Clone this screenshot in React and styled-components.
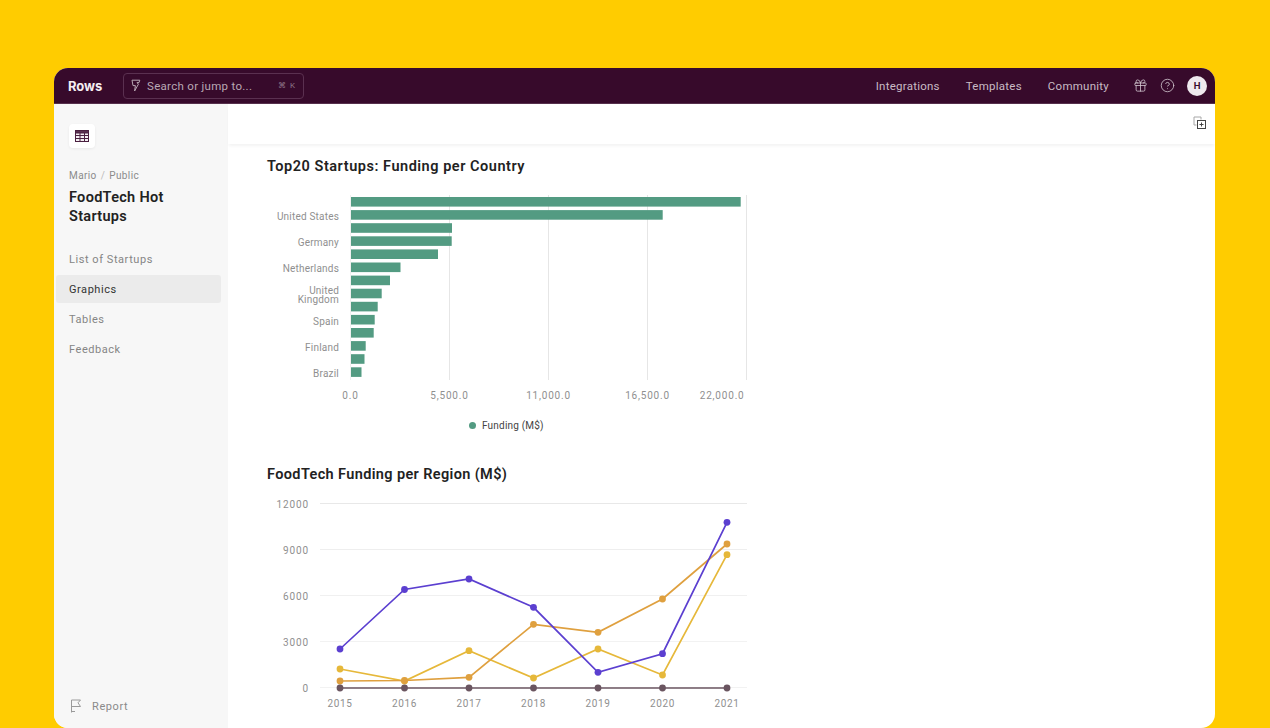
import styled, { createGlobalStyle } from "styled-components";
import { Gift, CircleHelp } from "lucide-react";

const GlobalStyle = createGlobalStyle`
  html, body {
    margin: 0;
    height: 100%;
    overflow: hidden;
    background: #ffcc00;
  }
  #root {
    height: 100%;
  }
`;

const Page = styled.div`
  box-sizing: border-box;
  height: 728px;
  padding: 68px 55px 0 54px;
  background: #ffcc00;
  font-family: Roboto, "Noto Sans", sans-serif;
`;

const Frame = styled.div`
  display: flex;
  flex-direction: column;
  height: 660px;
  background: #fff;
  border-radius: 14px;
  overflow: hidden;
`;

const Header = styled.header`
  box-sizing: border-box;
  display: flex;
  align-items: center;
  flex: none;
  height: 36px;
  padding: 0 8px 0 14px;
  background: #370a2b;
  border-bottom: 1px solid #56304c;
`;

const Logo = styled.div`
  width: 55px;
  font-family: Inter, sans-serif;
  font-size: 13px;
  font-weight: 700;
  letter-spacing: -0.1px;
  color: #f4eef2;
`;

const SearchBox = styled.div`
  box-sizing: border-box;
  display: flex;
  align-items: center;
  width: 181px;
  height: 26px;
  padding: 0 7px;
  border: 1px solid #5a3050;
  border-radius: 4px;
  color: #b9a8b4;
`;

const SearchText = styled.span`
  flex: 1;
  margin-left: 6px;
  font-size: 11.5px;
  letter-spacing: 0.3px;
`;

const Shortcut = styled.span`
  font-size: 8px;
  letter-spacing: 1px;
  color: #8d7587;
`;

const TopNav = styled.nav`
  display: flex;
  align-items: center;
  gap: 26px;
  margin-left: auto;
`;

const TopLink = styled.a`
  font-size: 11.5px;
  letter-spacing: 0.25px;
  color: #c9bbc5;
`;

const IconRow = styled.div`
  display: flex;
  align-items: center;
  gap: 12px;
  margin-left: 24px;
  color: #d2c6cf;
`;

const Avatar = styled.div`
  display: flex;
  align-items: center;
  justify-content: center;
  width: 20px;
  height: 20px;
  border-radius: 50%;
  background: #efe9ee;
  color: #370a2b;
  font-family: Inter, sans-serif;
  font-size: 9px;
  font-weight: 700;
`;

const Body = styled.div`
  display: flex;
  flex: 1;
  min-height: 0;
`;

const Sidebar = styled.aside`
  box-sizing: border-box;
  display: flex;
  flex-direction: column;
  flex: none;
  width: 174px;
  padding: 20px 7px 15px 2px;
  background: #f7f7f7;
`;

const TableTile = styled.div`
  display: flex;
  align-items: center;
  justify-content: center;
  width: 26px;
  height: 24px;
  margin-left: 13px;
  border-radius: 4px;
  background: #fff;
  box-shadow: 0 1px 3px rgba(0, 0, 0, 0.06);
`;

const Breadcrumb = styled.div`
  margin: 22px 0 0 13px;
  font-size: 10px;
  line-height: 12px;
  letter-spacing: 0.4px;
  color: #8b8b8b;
`;

const Slash = styled.span`
  margin: 0 4px;
  color: #bbb;
`;

const DocTitle = styled.h1`
  margin: 6px 0 0 13px;
  font-size: 14.5px;
  font-weight: 600;
  line-height: 19px;
  letter-spacing: 0.3px;
  color: #222;
`;

const SideNav = styled.nav`
  display: flex;
  flex-direction: column;
  gap: 2px;
  margin-top: 19px;
`;

const SideItem = styled.a`
  display: flex;
  align-items: center;
  height: 28px;
  padding-left: 13px;
  border-radius: 3px;
  font-size: 11px;
  letter-spacing: 0.55px;
  background: ${(p) => (p.$active ? "#ebebeb" : "transparent")};
  color: ${(p) => (p.$active ? "#333" : "#858585")};
`;

const ReportRow = styled.div`
  display: flex;
  align-items: center;
  gap: 10px;
  margin: auto 0 0 14px;
  font-size: 11px;
  letter-spacing: 0.6px;
  color: #8a8a8a;
`;

const Main = styled.main`
  display: flex;
  flex-direction: column;
  flex: 1;
  min-width: 0;
`;

const Toolbar = styled.div`
  box-sizing: border-box;
  display: flex;
  align-items: center;
  justify-content: flex-end;
  flex: none;
  height: 40px;
  padding: 0 8px 2px 0;
  box-shadow: 0 3px 3px -1px rgba(0, 0, 0, 0.05);
`;

const Content = styled.div`
  padding-left: 39px;
`;

const ChartTitle = styled.h2`
  margin: ${(p) => p.$top}px 0 0;
  font-size: 14.5px;
  font-weight: 600;
  line-height: 20px;
  letter-spacing: ${(p) => p.$spacing}px;
  color: #222;
`;

const ChartSvg = styled.svg`
  display: block;
  margin-top: ${(p) => p.$top}px;
`;

const Tick = styled.text`
  font-family: Roboto, sans-serif;
  font-size: 10px;
  letter-spacing: ${(p) => p.$spacing || 0.2}px;
  fill: #8f8f8f;
`;

const LegendLabel = styled.text`
  font-family: Roboto, sans-serif;
  font-size: 10px;
  letter-spacing: 0.2px;
  fill: #444;
`;

const bars = [740.7, 662.7, 452, 451.7, 438, 400.5, 390, 381.7, 377.7, 374.7, 373.7, 365.7, 364.5, 361.5];

const countries = [
  { lines: ["United States"], y: 219.5 },
  { lines: ["Germany"], y: 245.5 },
  { lines: ["Netherlands"], y: 271.5 },
  { lines: ["United", "Kingdom"], y: 293.5 },
  { lines: ["Spain"], y: 324.5 },
  { lines: ["Finland"], y: 351 },
  { lines: ["Brazil"], y: 377 },
];

const barTicks = [
  { x: 350.5, label: "0.0" },
  { x: 449.5, label: "5,500.0" },
  { x: 548.5, label: "11,000.0" },
  { x: 647.5, label: "16,500.0" },
];

const years = [2015, 2016, 2017, 2018, 2019, 2020, 2021];
const yearX = [340, 404.5, 469, 533.5, 598, 662.5, 727];

const levels = [
  { y: 503.5, label: "12000", color: "#e8e8e8" },
  { y: 549.5, label: "9000", color: "#eeeeee" },
  { y: 595.5, label: "6000", color: "#f0f0f0" },
  { y: 641.5, label: "3000", color: "#f2f2f2" },
  { y: 687.5, label: "0", color: "#f2f2f2" },
];

const series = [
  { color: "#e6b83a", ys: [669, 681, 650.7, 678, 649, 675, 554.7] },
  { color: "#dfa03f", ys: [681, 680.5, 677.3, 624.3, 632.3, 599, 544] },
  { color: "#5b3fd0", ys: [649, 589.5, 579, 607.3, 672.3, 653.7, 522.3] },
  { color: "#6a5560", ys: [688, 688, 688, 688, 688, 688, 688] },
];

function BoltIcon() {
  return (
    <svg width="10" height="13" viewBox="0 0 10 13" fill="none" stroke="#b9a8b4" strokeWidth="1">
      <path d="M1 1.2 H8.8 L8 3.6 H6 L7.4 5.2 L3.6 12 L4.4 6.6 H2 Z" strokeLinejoin="round" />
    </svg>
  );
}

function TableIcon() {
  return (
    <svg width="14" height="12" viewBox="0 0 14 12" fill="none" stroke="#4a2040" strokeWidth="1">
      <rect x="0.5" y="0.5" width="13" height="11" fill="#f4eef2" />
      <path d="M0.5 0.5 H13.5 V3 H0.5 Z" fill="#5a3050" />
      <path d="M0.5 5.5 H13.5 M0.5 8.5 H13.5 M5 3 V11.5 M9.5 3 V11.5" />
    </svg>
  );
}

function AddCopyIcon() {
  return (
    <svg width="14" height="14" viewBox="0 0 14 14" fill="none" strokeWidth="1">
      <path d="M3.5 9 H1 V1 H8 V3.5" stroke="#a8a8a8" />
      <rect x="4.5" y="4.5" width="8" height="8" stroke="#444" />
      <path d="M8.5 6.5 V10.5 M6.5 8.5 H10.5" stroke="#444" />
    </svg>
  );
}

function FlagIcon() {
  return (
    <svg width="12" height="14" viewBox="0 0 12 14" fill="none" stroke="#9a9a9a" strokeWidth="1">
      <path d="M1.5 13.5 V1 H10.5 L8 3.8 L10.5 7.5 H1.5 M1.5 12.5 H5" />
    </svg>
  );
}

function BarChart() {
  return (
    <ChartSvg $top={8} width="500" height="255" viewBox="267 185 500 255">
      {barTicks.map((t) => (
        <line key={t.x} x1={t.x} x2={t.x} y1="195" y2="380" stroke={t.x === 350.5 ? "#f0f0f0" : "#e6e6e6"} />
      ))}
      <line x1="746.5" x2="746.5" y1="195" y2="380" stroke="#e6e6e6" />
      {bars.map((end, i) => (
        <rect key={i} x="351" y={197 + i * 13.1} width={end - 351} height="9.6" fill="#539b82" />
      ))}
      {countries.map((c) =>
        c.lines.map((line, i) => (
          <Tick key={line} x="339" y={c.y + i * 9.5} textAnchor="end">{line}</Tick>
        ))
      )}
      {barTicks.map((t) => (
        <Tick key={t.label} $spacing={0.8} x={t.x} y="399" textAnchor="middle">{t.label}</Tick>
      ))}
      <Tick $spacing={0.8} x="744.5" y="399" textAnchor="end">22,000.0</Tick>
      <circle cx="472.5" cy="425.5" r="3.5" fill="#539b82" />
      <LegendLabel x="482" y="429">Funding (M$)</LegendLabel>
    </ChartSvg>
  );
}

function LineChart() {
  return (
    <ChartSvg $top={5} width="500" height="238" viewBox="267 490 500 238">
      {levels.map((l) => (
        <g key={l.label}>
          <line x1="320" x2="747" y1={l.y} y2={l.y} stroke={l.color} />
          <Tick $spacing={0.9} x="309" y={l.y + 4.2} textAnchor="end">{l.label}</Tick>
        </g>
      ))}
      {years.map((year, i) => (
        <Tick key={year} $spacing={0.6} x={yearX[i]} y="707" textAnchor="middle">{year}</Tick>
      ))}
      {series.map((s) => (
        <g key={s.color}>
          <polyline
            points={s.ys.map((y, i) => `${yearX[i]},${y}`).join(" ")}
            fill="none"
            stroke={s.color}
            strokeWidth="1.7"
          />
          {s.ys.map((y, i) => (
            <circle key={i} cx={yearX[i]} cy={y} r="3.4" fill={s.color} />
          ))}
        </g>
      ))}
    </ChartSvg>
  );
}

export default function App() {
  return (
    <Page>
      <GlobalStyle />
      <Frame>
        <Header>
          <Logo>Rows</Logo>
          <SearchBox>
            <BoltIcon />
            <SearchText>Search or jump to...</SearchText>
            <Shortcut>⌘ K</Shortcut>
          </SearchBox>
          <TopNav>
            <TopLink>Integrations</TopLink>
            <TopLink>Templates</TopLink>
            <TopLink>Community</TopLink>
          </TopNav>
          <IconRow>
            <Gift size={15} strokeWidth={1.3} />
            <CircleHelp size={15} strokeWidth={1.3} />
            <Avatar>H</Avatar>
          </IconRow>
        </Header>
        <Body>
          <Sidebar>
            <TableTile>
              <TableIcon />
            </TableTile>
            <Breadcrumb>
              Mario<Slash>/</Slash>Public
            </Breadcrumb>
            <DocTitle>
              FoodTech Hot
              <br />
              Startups
            </DocTitle>
            <SideNav>
              <SideItem>List of Startups</SideItem>
              <SideItem $active>Graphics</SideItem>
              <SideItem>Tables</SideItem>
              <SideItem>Feedback</SideItem>
            </SideNav>
            <ReportRow>
              <FlagIcon />
              Report
            </ReportRow>
          </Sidebar>
          <Main>
            <Toolbar>
              <AddCopyIcon />
            </Toolbar>
            <Content>
              <ChartTitle $top={13} $spacing={0.53}>Top20 Startups: Funding per Country</ChartTitle>
              <BarChart />
              <ChartTitle $top={25} $spacing={0.37}>FoodTech Funding per Region (M$)</ChartTitle>
              <LineChart />
            </Content>
          </Main>
        </Body>
      </Frame>
    </Page>
  );
}
